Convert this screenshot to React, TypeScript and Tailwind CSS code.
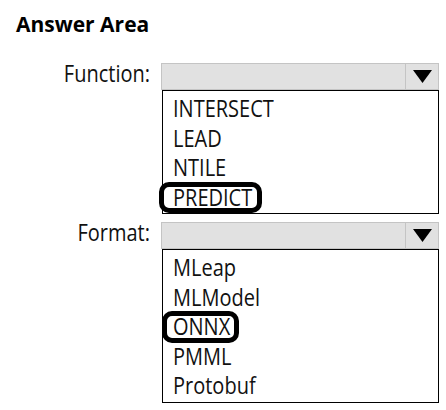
const Arrow = () => (
  <svg width="19" height="13" viewBox="0 0 19 13">
    <polygon points="0,0 19,0 9.5,13" fill="#000" />
  </svg>
);

type Props = {
  label: string;
  options: string[];
  picked: string;
  ring: string;
};

const DropRow = ({ label, options, picked, ring }: Props) => (
  <>
    <div className="text-right text-[20px] leading-[24px] text-[#111]">
      <span className="inline-block origin-[50%_82%] scale-y-[1.15]">{label}</span>
    </div>
    <div className="flex flex-col">
      <div className="flex h-[27px] border border-[#c4c4c4] bg-[#e1e1e1]">
        <div className="flex-1" />
        <div className="flex w-[33px] items-center justify-center border-l border-[#c4c4c4]">
          <Arrow />
        </div>
      </div>
      <div className="ml-px border border-black bg-white pt-[4px] pl-[10px]">
        {options.map((o) => (
          <div key={o} className="h-[29.5px] text-[20px] leading-[29.5px] text-[#111]">
            <span className="relative inline-block">
              <span className="inline-block origin-[50%_77%] scale-y-[1.15]">{o}</span>
              {o === picked && <span className={ring} />}
            </span>
          </div>
        ))}
      </div>
    </div>
  </>
);

export default function App() {
  return (
    <div className="h-[410px] w-[446px] overflow-hidden bg-white pt-[14px] pl-[16px] font-['Open_Sans',sans-serif]">
      <h1 className="text-[21px] font-bold leading-[20px] text-black">Answer Area</h1>
      <div className="mt-[29px] -ml-[16px] grid grid-cols-[150px_278px] gap-x-[11px] gap-y-[8px]">
        <DropRow
          label="Function:"
          options={["INTERSECT", "LEAD", "NTILE", "PREDICT"]}
          picked="PREDICT"
          ring="absolute -left-[14px] -right-[10px] -top-[2px] bottom-0 rounded-[10px] border-[5px] border-black"
        />
        <DropRow
          label="Format:"
          options={["MLeap", "MLModel", "ONNX", "PMML", "Protobuf"]}
          picked="ONNX"
          ring="absolute -left-[11px] -right-[9px] -top-[2px] bottom-0 rounded-[10px] border-[5px] border-black"
        />
      </div>
    </div>
  );
}
